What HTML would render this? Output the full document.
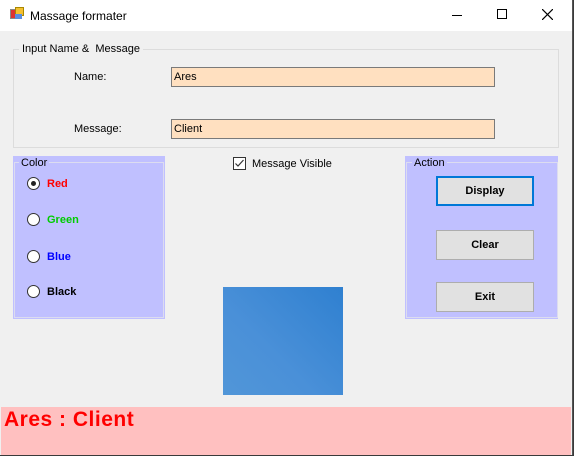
<!DOCTYPE html><html><head><style>
body{margin:0;width:574px;height:456px;overflow:hidden;background:#3a3a3a;font-family:"Liberation Sans",sans-serif;font-size:11px;}
#w{position:absolute;left:0;top:0;width:572px;height:455px;background:#f0f0f0;border-right:1px solid #555;}
.a{position:absolute;}
#t{left:0;top:0;width:572px;height:31px;background:#fff;}
.tb{background:#ffe0c0;border:1px solid #7a7a7a;height:18px;line-height:18px;padding-left:2px;box-sizing:border-box;}
.btn{background:#e1e1e1;border:1px solid #adadad;box-sizing:border-box;text-align:center;font-weight:bold;font-size:11px;}
.rb{width:13px;height:13px;border:1px solid #333;border-radius:50%;background:#fff;box-sizing:border-box;}
.rl{font-weight:bold;font-size:11px;}
</style></head><body><div id="w">
<div class="a" id="t">
<div class="a" style="left:10px;top:9px;width:6px;height:8px;background:#d33;border:1px solid #888"></div>
<div class="a" style="left:15px;top:7px;width:7px;height:7px;background:#f4c030;border:1px solid #a80"></div>
<div class="a" style="left:15px;top:14px;width:7px;height:5px;background:#5a8ee0"></div>
<div class="a" style="left:30px;top:9px;font-size:12px">Massage formater</div>
<div class="a" style="left:452px;top:15px;width:10px;height:1px;background:#000"></div>
<div class="a" style="left:497px;top:9px;width:10px;height:10px;border:1px solid #000;box-sizing:border-box"></div>
<svg class="a" style="left:542px;top:9px" width="11" height="11"><path d="M0 0L11 11M11 0L0 11" stroke="#000" stroke-width="1.2"/></svg>
</div>
<div class="a" style="left:13px;top:49px;width:546px;height:99px;border:1px solid #dcdcdc;box-sizing:border-box"></div>
<div class="a" style="left:19px;top:43px;background:#f0f0f0;padding:0 3px">Input Name &amp;&nbsp; Message</div>
<div class="a" style="left:74px;top:71px">Name:</div>
<div class="a" style="left:74px;top:123px">Message:</div>
<div class="a tb" style="left:171px;top:67px;width:324px;height:20px">Ares</div>
<div class="a tb" style="left:171px;top:119px;width:324px;height:20px">Client</div>
<div class="a" style="left:13px;top:156px;width:152px;height:163px;background:#c0c0ff"></div>
<div class="a" style="left:14px;top:162px;width:150px;height:156px;border:1px solid #dcdcf0;box-sizing:border-box"></div>
<div class="a" style="left:19px;top:157px;background:#c0c0ff;padding:0 2px">Color</div>
<div class="a rb" style="left:27px;top:177px;"><div class="a" style="left:3px;top:3px;width:5px;height:5px;border-radius:50%;background:#222"></div></div>
<div class="a rl" style="left:47px;top:178px;color:#f00">Red</div>
<div class="a rb" style="left:27px;top:213px"></div><div class="a rl" style="left:47px;top:214px;color:#0c0">Green</div>
<div class="a rb" style="left:27px;top:250px"></div><div class="a rl" style="left:47px;top:251px;color:#00f">Blue</div>
<div class="a rb" style="left:27px;top:285px"></div><div class="a rl" style="left:47px;top:286px;color:#000">Black</div>
<svg class="a" style="left:233px;top:157px" width="13" height="13"><rect x="0.5" y="0.5" width="12" height="12" fill="#fff" stroke="#333"/><path d="M2.5 6.5L5 9L10.5 3" fill="none" stroke="#333" stroke-width="1.2"/></svg>
<div class="a" style="left:252px;top:158px">Message Visible</div>
<div class="a" style="left:405px;top:156px;width:153px;height:163px;background:#c0c0ff"></div>
<div class="a" style="left:406px;top:162px;width:152px;height:156px;border:1px solid #dcdcf0;box-sizing:border-box"></div>
<div class="a" style="left:412px;top:157px;background:#c0c0ff;padding:0 2px">Action</div>
<div class="a btn" style="left:436px;top:176px;width:98px;height:30px;border:2px solid #0078d7;line-height:26px">Display</div>
<div class="a btn" style="left:436px;top:230px;width:98px;height:30px;line-height:28px">Clear</div>
<div class="a btn" style="left:436px;top:282px;width:98px;height:30px;line-height:28px">Exit</div>
<div class="a" style="left:223px;top:287px;width:120px;height:108px;background:linear-gradient(225deg,#2f80d0,#4a90d8 60%,#5196d8)"></div>
<div class="a" style="left:1px;top:407px;width:570px;height:48px;background:#ffc0c0"></div>
<div class="a" style="left:4px;top:408px;color:#f00;font-weight:bold;font-size:21px;letter-spacing:0.5px">Ares : Client</div>
</div></body></html>
